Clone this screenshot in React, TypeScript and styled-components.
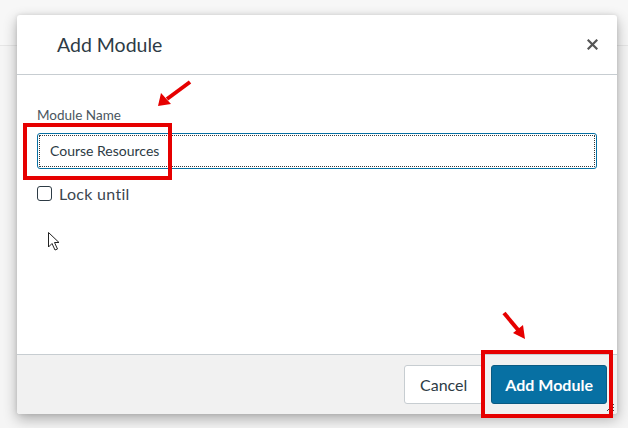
import React from "react";
import styled, { createGlobalStyle } from "styled-components";

const Global = createGlobalStyle`
  html, body { margin: 0; padding: 0; background: #f5f5f5; }
  body { font-family: Lato, "Open Sans", Arial, sans-serif; }
`;

const Page = styled.div`
  position: relative;
  width: 628px;
  height: 428px;
  overflow: hidden;
  background: #f5f5f5;
`;

const TopBar = styled.div`
  height: 45px;
  border-bottom: 1px solid #e6e6e6;
  background: #f7f7f7;
`;

const Dialog = styled.div`
  position: absolute;
  left: 17px;
  top: 15px;
  width: 600px;
  height: 399px;
  background: #fff;
  border-radius: 3px;
  box-shadow: 0 5px 14px rgba(0, 0, 0, 0.3), 0 0 4px rgba(0, 0, 0, 0.1);
  display: flex;
  flex-direction: column;
  overflow: hidden;
`;

const Header = styled.div`
  height: 59px;
  flex: none;
  border-bottom: 1px solid #c7cdd1;
  display: flex;
  align-items: center;
  justify-content: space-between;
  padding: 0 18px 0 40px;
`;

const Title = styled.h1`
  margin: 0;
  font-size: 19.5px;
  font-weight: 400;
  color: #2d3b45;
  line-height: 24px;
`;

const Close = styled.button`
  border: 0;
  background: transparent;
  width: 14px;
  height: 14px;
  padding: 0;
  display: flex;
  align-items: center;
  justify-content: center;
`;

const Body = styled.div`
  flex: 1;
  padding: 30px 20px 0 20px;
  display: flex;
  flex-direction: column;
`;

const Label = styled.label`
  font-size: 13.5px;
  line-height: 20px;
  color: #4a5660;
`;

const Input = styled.input`
  margin-top: 8px;
  box-sizing: border-box;
  width: 560px;
  height: 36px;
  border: 1px solid #0770a3;
  border-radius: 3px;
  padding: 0 12px 2px;
  font-family: Lato, Arial, sans-serif;
  font-size: 14px;
  color: #2d3b45;
  outline: 1px dotted #3a3a3a;
  outline-offset: -3px;
  background: #fff;
`;

const CheckRow = styled.div`
  margin-top: 14px;
  display: flex;
  align-items: center;
  gap: 7px;
  height: 20px;
`;

const Box = styled.span`
  width: 15px;
  height: 15px;
  box-sizing: border-box;
  border: 1.5px solid #2d3b45;
  border-radius: 3px;
  background: #fff;
`;

const CheckText = styled.span`
  font-size: 16px;
  color: #3b4650;
  letter-spacing: 0.3px;
`;

const Footer = styled.div`
  height: 60px;
  flex: none;
  box-sizing: border-box;
  border-top: 1px solid #c7cdd1;
  background: #f1f1f1;
  display: flex;
  justify-content: flex-end;
  align-items: center;
  gap: 8px;
  padding: 0 10px 0 0;
`;

const Button = styled.button<{ $primary?: boolean }>`
  height: 39px;
  box-sizing: border-box;
  border-radius: 3px;
  padding: 0 ${(p) => (p.$primary ? 13 : 15)}px;
  font-family: Lato, Arial, sans-serif;
  font-size: 16px;
  font-weight: ${(p) => (p.$primary ? 700 : 400)};
  color: ${(p) => (p.$primary ? "#fff" : "#2d3b45")};
  background: ${(p) => (p.$primary ? "#0770a3" : "#ffffff")};
  border: 1px solid ${(p) => (p.$primary ? "#0a5a82" : "#c7cdd1")};
`;

const Highlight = styled.div<{ $l: number; $t: number; $w: number; $h: number }>`
  position: absolute;
  left: ${(p) => p.$l}px;
  top: ${(p) => p.$t}px;
  width: ${(p) => p.$w}px;
  height: ${(p) => p.$h}px;
  box-sizing: border-box;
  border: 4.5px solid #e60000;
  pointer-events: none;
`;

const Overlay = styled.svg`
  position: absolute;
  left: 0;
  top: 0;
  pointer-events: none;
`;

const Handle = styled.svg`
  position: absolute;
  right: 2px;
  bottom: 2px;
`;

export default function App() {
  return (
    <Page>
      <Global />
      <TopBar />
      <Dialog>
        <Header>
          <Title>Add Module</Title>
          <Close aria-label="Close">
            <svg width="11" height="11" viewBox="0 0 11 11">
              <path d="M1.5 1.5 L9.5 9.5 M9.5 1.5 L1.5 9.5" stroke="#555" strokeWidth="2.2" strokeLinecap="square" />
            </svg>
          </Close>
        </Header>
        <Body>
          <Label>Module Name</Label>
          <Input readOnly value="Course Resources" />
          <CheckRow>
            <Box />
            <CheckText>Lock until</CheckText>
          </CheckRow>
        </Body>
        <Footer>
          <Button>Cancel</Button>
          <Button $primary>Add Module</Button>
        </Footer>
        <Handle width="9" height="9" viewBox="0 0 9 9">
          <path d="M1 8 L8 1 M4 8 L8 4 M7 8 L8 7" stroke="#444" strokeWidth="1" />
        </Handle>
      </Dialog>
      <Highlight $l={23} $t={123} $w={149} $h={57} />
      <Highlight $l={481} $t={350} $w={132} $h={68} />
      <Overlay width="628" height="428" viewBox="0 0 628 428">
        <g stroke="#e60000" strokeWidth="4" fill="none" strokeLinecap="butt">
          <path d="M190 82 L167 99" />
          <path d="M504 313 L519 331" />
        </g>
        <g fill="#e60000">
          <polygon points="158,106 161,93 171,104" />
          <polygon points="525,339 513,333 523,325" />
        </g>
        <path d="M48.5 232.5 L48.5 247 L52 243.5 L55 250 L57.5 249 L54.5 242.5 L59 242.5 Z" fill="#fff" stroke="#222" strokeWidth="1" strokeLinejoin="round" />
      </Overlay>
    </Page>
  );
}
